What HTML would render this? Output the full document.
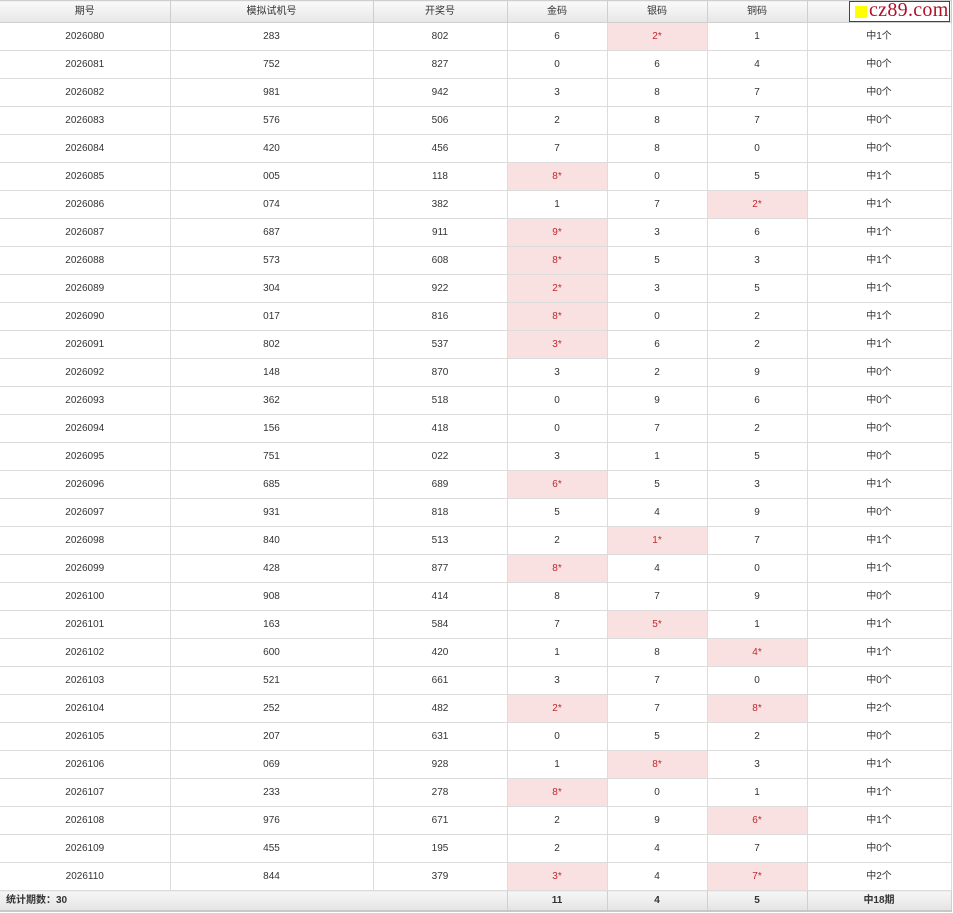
<!DOCTYPE html>
<html><head><meta charset="utf-8"><style>
body{margin:0;background:#fff;width:953px;height:913px;overflow:hidden;position:relative;font-family:"Liberation Sans","Noto Sans CJK SC",sans-serif;}
table{position:absolute;left:0;top:0;border-collapse:collapse;table-layout:fixed;width:951px;font-size:10px;color:#333;line-height:12px;}
td,th{border:1px solid #dcdcdc;text-align:center;padding:0;line-height:12px;vertical-align:middle;}
td span,th span{display:inline-block;line-height:12px;height:12px;}
th{height:21px;font-weight:normal;background:linear-gradient(#fafafa,#e6e6e6);color:#333;border-color:#cfcfcf;}
td{height:27px;}
tr td:first-child,tr th:first-child{border-left:none;}
td.h{background:#f9e1e2;color:#c0282d;}
tr.f td{height:19px;background:linear-gradient(#f6f6f6,#e4e4e4);font-weight:bold;border-color:#cfcfcf;border-bottom:2px solid #c8c8c8;}
tr.f td.l{text-align:left;padding-left:6px;}
.logo{position:absolute;left:849px;top:1px;width:99px;height:19px;border:1px solid #b0102a;background:#fff;overflow:hidden;}
.logo i{position:absolute;left:5px;top:4px;width:12px;height:12px;background:#ffff00;}
.logo b{position:absolute;left:19px;top:-3px;font-weight:normal;font-family:"Liberation Serif",serif;font-size:20px;color:#b0102a;letter-spacing:0.3px;}
</style></head><body>
<table>
<colgroup><col style="width:170px"><col style="width:203px"><col style="width:134px"><col style="width:100px"><col style="width:100px"><col style="width:100px"><col style="width:144px"></colgroup>
<tr><th><span>期号</span></th><th><span>模拟试机号</span></th><th><span>开奖号</span></th><th><span>金码</span></th><th><span>银码</span></th><th><span>铜码</span></th><th></th></tr>
<tr><td>2026080</td><td>283</td><td>802</td><td>6</td><td class="h">2*</td><td>1</td><td><span>中1个</span></td></tr>
<tr><td>2026081</td><td>752</td><td>827</td><td>0</td><td>6</td><td>4</td><td><span>中0个</span></td></tr>
<tr><td>2026082</td><td>981</td><td>942</td><td>3</td><td>8</td><td>7</td><td><span>中0个</span></td></tr>
<tr><td>2026083</td><td>576</td><td>506</td><td>2</td><td>8</td><td>7</td><td><span>中0个</span></td></tr>
<tr><td>2026084</td><td>420</td><td>456</td><td>7</td><td>8</td><td>0</td><td><span>中0个</span></td></tr>
<tr><td>2026085</td><td>005</td><td>118</td><td class="h">8*</td><td>0</td><td>5</td><td><span>中1个</span></td></tr>
<tr><td>2026086</td><td>074</td><td>382</td><td>1</td><td>7</td><td class="h">2*</td><td><span>中1个</span></td></tr>
<tr><td>2026087</td><td>687</td><td>911</td><td class="h">9*</td><td>3</td><td>6</td><td><span>中1个</span></td></tr>
<tr><td>2026088</td><td>573</td><td>608</td><td class="h">8*</td><td>5</td><td>3</td><td><span>中1个</span></td></tr>
<tr><td>2026089</td><td>304</td><td>922</td><td class="h">2*</td><td>3</td><td>5</td><td><span>中1个</span></td></tr>
<tr><td>2026090</td><td>017</td><td>816</td><td class="h">8*</td><td>0</td><td>2</td><td><span>中1个</span></td></tr>
<tr><td>2026091</td><td>802</td><td>537</td><td class="h">3*</td><td>6</td><td>2</td><td><span>中1个</span></td></tr>
<tr><td>2026092</td><td>148</td><td>870</td><td>3</td><td>2</td><td>9</td><td><span>中0个</span></td></tr>
<tr><td>2026093</td><td>362</td><td>518</td><td>0</td><td>9</td><td>6</td><td><span>中0个</span></td></tr>
<tr><td>2026094</td><td>156</td><td>418</td><td>0</td><td>7</td><td>2</td><td><span>中0个</span></td></tr>
<tr><td>2026095</td><td>751</td><td>022</td><td>3</td><td>1</td><td>5</td><td><span>中0个</span></td></tr>
<tr><td>2026096</td><td>685</td><td>689</td><td class="h">6*</td><td>5</td><td>3</td><td><span>中1个</span></td></tr>
<tr><td>2026097</td><td>931</td><td>818</td><td>5</td><td>4</td><td>9</td><td><span>中0个</span></td></tr>
<tr><td>2026098</td><td>840</td><td>513</td><td>2</td><td class="h">1*</td><td>7</td><td><span>中1个</span></td></tr>
<tr><td>2026099</td><td>428</td><td>877</td><td class="h">8*</td><td>4</td><td>0</td><td><span>中1个</span></td></tr>
<tr><td>2026100</td><td>908</td><td>414</td><td>8</td><td>7</td><td>9</td><td><span>中0个</span></td></tr>
<tr><td>2026101</td><td>163</td><td>584</td><td>7</td><td class="h">5*</td><td>1</td><td><span>中1个</span></td></tr>
<tr><td>2026102</td><td>600</td><td>420</td><td>1</td><td>8</td><td class="h">4*</td><td><span>中1个</span></td></tr>
<tr><td>2026103</td><td>521</td><td>661</td><td>3</td><td>7</td><td>0</td><td><span>中0个</span></td></tr>
<tr><td>2026104</td><td>252</td><td>482</td><td class="h">2*</td><td>7</td><td class="h">8*</td><td><span>中2个</span></td></tr>
<tr><td>2026105</td><td>207</td><td>631</td><td>0</td><td>5</td><td>2</td><td><span>中0个</span></td></tr>
<tr><td>2026106</td><td>069</td><td>928</td><td>1</td><td class="h">8*</td><td>3</td><td><span>中1个</span></td></tr>
<tr><td>2026107</td><td>233</td><td>278</td><td class="h">8*</td><td>0</td><td>1</td><td><span>中1个</span></td></tr>
<tr><td>2026108</td><td>976</td><td>671</td><td>2</td><td>9</td><td class="h">6*</td><td><span>中1个</span></td></tr>
<tr><td>2026109</td><td>455</td><td>195</td><td>2</td><td>4</td><td>7</td><td><span>中0个</span></td></tr>
<tr><td>2026110</td><td>844</td><td>379</td><td class="h">3*</td><td>4</td><td class="h">7*</td><td><span>中2个</span></td></tr>
<tr class="f"><td class="l" colspan="3"><span>统计期数：30</span></td><td>11</td><td>4</td><td>5</td><td><span>中18期</span></td></tr>
</table>
<div class="logo"><i></i><b>cz89.com</b></div>
</body></html>
